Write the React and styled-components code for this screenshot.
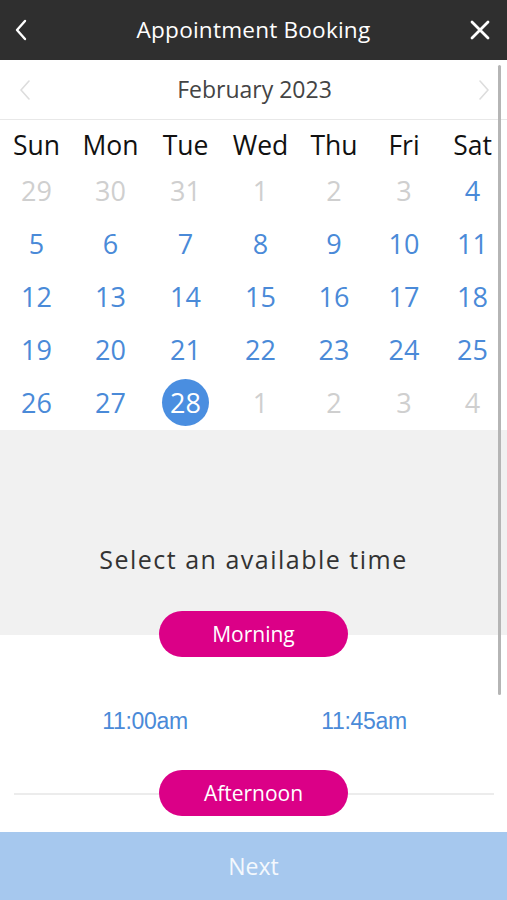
import React from 'react';
import styled, { createGlobalStyle } from 'styled-components';

const GlobalStyle = createGlobalStyle`
    html, body {
        margin: 0;
        padding: 0;
        background: #ffffff;
    }
    body {
        font-family: "Open Sans", "Liberation Sans", sans-serif;
    }
`

const Screen = styled.div`
    width: 507px;
    height: 900px;
    position: relative;
    overflow: hidden;
    display: flex;
    flex-direction: column;
    background-color: #ffffff;
`

const Header = styled.div`
    height: 60px;
    background-color: #2f2f2f;
    display: flex;
    align-items: center;
    justify-content: space-between;
    padding: 0 16px 0 10px;
    flex-shrink: 0;
`

const Title = styled.div`
    color: #ffffff;
    font-size: 22.6px;
    letter-spacing: 0.2px;
    margin: -1px 0 0 6px;
`

const IconButton = styled.div`
    width: 22px;
    height: 22px;
    display: flex;
    align-items: center;
    justify-content: center;
`

const MonthBar = styled.div`
    height: 59px;
    border-bottom: 1px solid #e8e8e8;
    display: flex;
    align-items: center;
    justify-content: space-between;
    padding: 0 16px 0 18px;
    flex-shrink: 0;
`

const MonthLabel = styled.div`
    color: #444444;
    font-size: 23px;
    margin-top: -2px;
`

const Grid = styled.div`
    display: grid;
    grid-template-columns: 73px 75px 75px 75px 72px 68px 69px;
    grid-template-rows: 42px repeat(5, 53px);
    padding: 2px 0 1px;
`

const DayName = styled.div`
    display: flex;
    align-items: center;
    justify-content: center;
    padding-top: 3px;
    font-size: 26.5px;
    color: #111111;
`

const DayCell = styled.div`
    display: flex;
    align-items: center;
    justify-content: center;
`

const DayNum = styled.div`
    width: 47px;
    height: 47px;
    border-radius: 50%;
    display: flex;
    align-items: center;
    justify-content: center;
    font-size: 27px;
    color: ${p => p.$selected ? '#ffffff' : p.$muted ? '#cfcfcf' : '#4a8ad8'};
    background-color: ${p => p.$selected ? '#4a8ee0' : 'transparent'};
`

const TimeArea = styled.div`
    background-color: #f1f1f1;
    height: 205px;
    display: flex;
    flex-direction: column;
    align-items: center;
    justify-content: flex-end;
    flex-shrink: 0;
`

const Prompt = styled.div`
    font-size: 25px;
    color: #333333;
    letter-spacing: 1.5px;
    margin-bottom: 59px;
`

const PillRow = styled.div`
    position: relative;
    display: flex;
    justify-content: center;
    margin: ${p => p.$margin};
    &::before {
        content: '';
        display: ${p => p.$line ? 'block' : 'none'};
        position: absolute;
        left: 14px;
        right: 13px;
        top: 50%;
        height: 2px;
        background-color: #ececec;
    }
`

const Pill = styled.div`
    position: relative;
    width: 189px;
    height: 46px;
    border-radius: 23px;
    background-color: #db0087;
    color: #ffffff;
    font-size: 21px;
    display: flex;
    align-items: center;
    justify-content: center;
`

const Times = styled.div`
    display: grid;
    grid-template-columns: 290px 148px;
    box-sizing: border-box;
    height: 113px;
    align-items: center;
    padding-top: 15px;
`

const Slot = styled.div`
    font-family: "Liberation Sans", Arial, sans-serif;
    font-size: 23px;
    color: #4a8ad8;
    text-align: center;
    letter-spacing: -0.3px;
`

const Spacer = styled.div`
    flex: 1;
`

const NextButton = styled.div`
    height: 68px;
    background-color: #a6c8ee;
    color: #f4f8fd;
    font-size: 23px;
    display: flex;
    align-items: center;
    justify-content: center;
    flex-shrink: 0;
`

const Scrollbar = styled.div`
    position: absolute;
    left: 498px;
    top: 65px;
    width: 3px;
    height: 630px;
    border-radius: 2px;
    background-color: #b5b5b5;
`

const Chevron = ({ dir, color, width }) => (
    <svg width="14" height="22" viewBox="0 0 14 22">
        <path
            d={dir === 'left' ? 'M11 2 L3 11 L11 20' : 'M3 2 L11 11 L3 20'}
            fill="none"
            stroke={color}
            strokeWidth={width}
            strokeLinecap="round"
            strokeLinejoin="round"
        />
    </svg>
)

const days = ['Sun', 'Mon', 'Tue', 'Wed', 'Thu', 'Fri', 'Sat']

const dates = [
    [29, true], [30, true], [31, true], [1, true], [2, true], [3, true], [4],
    [5], [6], [7], [8], [9], [10], [11],
    [12], [13], [14], [15], [16], [17], [18],
    [19], [20], [21], [22], [23], [24], [25],
    [26], [27], [28, false, true], [1, true], [2, true], [3, true], [4, true],
]

const App = () => {
    return (
        <Screen>
            <GlobalStyle />
            <Header>
                <IconButton>
                    <Chevron dir="left" color="#ffffff" width={2.4} />
                </IconButton>
                <Title>Appointment Booking</Title>
                <IconButton>
                    <svg width="20" height="20" viewBox="0 0 20 20">
                        <path d="M2 2 L18 18 M18 2 L2 18" stroke="#ffffff" strokeWidth="2.8" strokeLinecap="round" />
                    </svg>
                </IconButton>
            </Header>
            <MonthBar>
                <Chevron dir="left" color="#dddddd" width={1.6} />
                <MonthLabel>February 2023</MonthLabel>
                <Chevron dir="right" color="#dddddd" width={1.6} />
            </MonthBar>
            <Grid>
                {days.map(d => <DayName key={d}>{d}</DayName>)}
                {dates.map(([n, muted, selected], i) => (
                    <DayCell key={i}>
                        <DayNum $muted={muted} $selected={selected}>{n}</DayNum>
                    </DayCell>
                ))}
            </Grid>
            <TimeArea>
                <Prompt>Select an available time</Prompt>
            </TimeArea>
            <PillRow $margin="-24px 0 0 0">
                <Pill>Morning</Pill>
            </PillRow>
            <Times>
                <Slot>11:00am</Slot>
                <Slot>11:45am</Slot>
            </Times>
            <PillRow $line $margin="0">
                <Pill>Afternoon</Pill>
            </PillRow>
            <Spacer />
            <NextButton>Next</NextButton>
            <Scrollbar />
        </Screen>
    )
}

export default App
